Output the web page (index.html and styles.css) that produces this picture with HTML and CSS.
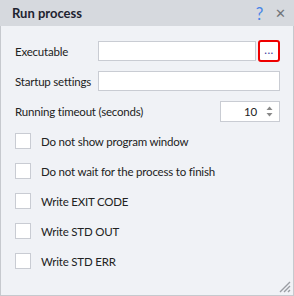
FILE: index.html
```html
<!DOCTYPE html>
<html lang="en">
<head>
    <meta charset="utf-8">
    <title>Run process</title>
    <link rel="stylesheet" href="styles.css">
</head>
<body>
    <div class="dialog">
        <header class="titlebar">
            <span class="title">Run process</span>
            <span class="help">?</span>
            <span class="close">&#x2715;</span>
        </header>
        <section class="content">
            <div class="row">
                <label class="label">Executable</label>
                <input class="field" type="text">
                <button class="browse">...</button>
            </div>
            <div class="row">
                <label class="label">Startup settings</label>
                <input class="field" type="text">
            </div>
            <div class="row">
                <label class="label grow">Running timeout (seconds)</label>
                <div class="spin">
                    <span class="value">10</span>
                    <svg class="arrows" width="7" height="11" viewBox="0 0 7 11">
                        <path d="M3.5 0.5 L6.5 4 L0.5 4 Z" fill="#888"/>
                        <path d="M0.5 7 L6.5 7 L3.5 10.5 Z" fill="#888"/>
                    </svg>
                </div>
            </div>
            <div class="row"><span class="check"></span><span>Do not show program window</span></div>
            <div class="row"><span class="check"></span><span>Do not wait for the process to finish</span></div>
            <div class="row"><span class="check"></span><span>Write EXIT CODE</span></div>
            <div class="row"><span class="check"></span><span>Write STD OUT</span></div>
            <div class="row"><span class="check"></span><span>Write STD ERR</span></div>
        </section>
        <svg class="grip" width="13" height="13" viewBox="0 0 13 13">
            <path d="M12 2 L2 12 M12 6 L6 12 M12 10 L10 12" stroke="#9a9da3" stroke-width="1.4"/>
        </svg>
    </div>
</body>
</html>
```

FILE: styles.css
```css
* {
    box-sizing: border-box;
}

body {
    margin: 0;
    font-family: Lato, "Noto Sans", sans-serif;
    font-size: 11.5px;
    letter-spacing: -0.2px;
    color: #222;
}

.dialog {
    position: relative;
    width: 294px;
    height: 296px;
    background: #f0f2f6;
    border: 1px solid #c6c9ce;
    border-top: none;
}

.titlebar {
    display: flex;
    align-items: center;
    height: 26px;
    margin: 0 -1px;
    padding: 0 8px 0 12px;
    background: #d6d9de;
}

.title {
    flex: 1;
    font-weight: bold;
    font-size: 13px;
    letter-spacing: 0;
    color: #1e2330;
}

.help {
    color: #4a86e8;
    font-size: 17px;
    margin-right: 12px;
}

.close {
    color: #707479;
    font-size: 13px;
}

.content {
    display: flex;
    flex-direction: column;
    padding: 10px 13px 0 14px;
}

.row {
    display: flex;
    align-items: center;
    height: 30px;
    white-space: nowrap;
}

.label {
    width: 83px;
    flex: none;
}

.label.grow {
    flex: 1;
}

.field {
    flex: 1;
    min-width: 0;
    height: 20px;
    border: 1px solid #c9ccd3;
    background: #fff;
    font: inherit;
}

.browse {
    flex: none;
    width: 22px;
    height: 22px;
    margin-left: 2px;
    padding: 0 0 4px;
    border: 2px solid #ee0000;
    border-radius: 3px;
    background: #fff;
    color: #3a3aa0;
    font: inherit;
    letter-spacing: 0.5px;
}

.spin {
    display: flex;
    align-items: center;
    justify-content: flex-end;
    width: 60px;
    height: 21px;
    padding-right: 6px;
    border: 1px solid #c9ccd3;
    background: #fff;
}

.value {
    margin-right: 9px;
}

.check {
    flex: none;
    width: 16px;
    height: 16px;
    margin-right: 10px;
    border: 1px solid #c9ccd3;
    background: #fff;
}

.grip {
    position: absolute;
    right: 2px;
    bottom: 2px;
}
```
